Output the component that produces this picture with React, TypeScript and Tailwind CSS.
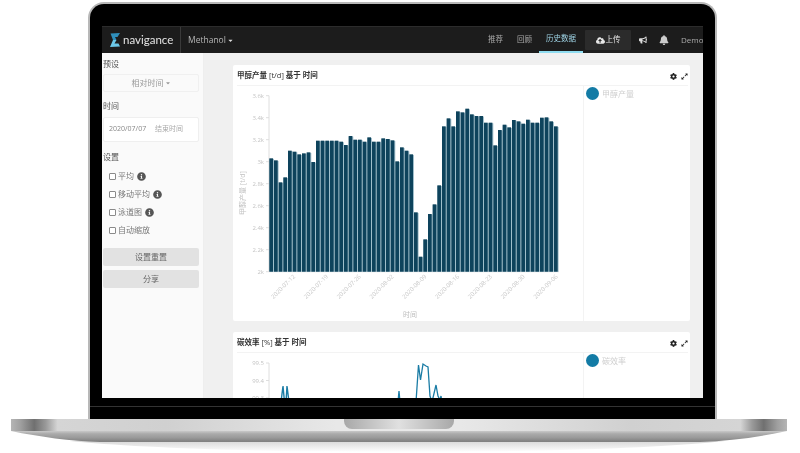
import { FaBell, FaBullhorn, FaCaretDown, FaCloudUploadAlt, FaCog, FaExpandAlt, FaInfoCircle } from 'react-icons/fa';

const FONT = "font-['Open_Sans','Noto_Sans_CJK_SC',sans-serif]";

// bar tops measured from the chart, in page px * 3 (offset from y=80)
const BAR_TOPS = [
  235, 241, 307, 292, 212, 215, 223, 220, 217, 246, 182, 182, 182, 182, 182, 185, 195, 168, 179, 179, 185, 172, 185, 185,
  175, 177, 181, 244, 202, 212, 223, 397, 530, 478, 402, 373, 316, 139, 115, 139, 94, 97, 86, 103, 108, 108, 128, 128,
  196, 150, 134, 142, 120, 124, 131, 119, 128, 128, 113, 112, 124, 139,
];

const Y_TICKS = ['3.6k', '3.4k', '3.2k', '3k', '2.8k', '2.6k', '2.4k', '2.2k', '2k'];
const X_TICKS = ['2020-07-12', '2020-07-19', '2020-07-26', '2020-08-02', '2020-08-09', '2020-08-16', '2020-08-23', '2020-08-30', '2020-09-06'];

function ProductionChart() {
  return (
    <svg viewBox="233 86 350 235" className="h-[235px] w-[350px]">
      <line x1="269" y1="95.7" x2="269" y2="271.7" stroke="#dedede" />
      <line x1="269" y1="271.7" x2="559" y2="271.7" stroke="#dedede" />
      {Y_TICKS.map((t, i) => (
        <g key={t}>
          <line x1="266" x2="269" y1={95.7 + i * 22} y2={95.7 + i * 22} stroke="#dedede" />
          <text x="264" y={97.7 + i * 22} textAnchor="end" fontSize="6" fill="#c4c4c4">{t}</text>
        </g>
      ))}
      {BAR_TOPS.map((top, i) => {
        const y = 80 + top / 3;
        const x = 230 + (118 + 14 * i) / 3;
        return (
          <g key={i}>
            <rect x={x} y={y + 0.6} width="4.67" height={271.7 - y - 0.6} fill="#a6c4d0" />
            <rect x={x} y={y} width="3.7" height={271.7 - y} fill="#0e435c" />
          </g>
        );
      })}
      {X_TICKS.map((t, i) => {
        const x = 295.7 + i * 32.8;
        return (
          <text key={t} x={x} y="277" textAnchor="end" fontSize="6" fill="#c8c8c8" transform={`rotate(-45 ${x} 277)`}>
            {t}
          </text>
        );
      })}
      <text x="410" y="317" textAnchor="middle" fontSize="7" fill="#bdbdbd">时间</text>
      <text x="245" y="193" textAnchor="middle" fontSize="7" fill="#c4c4c4" transform="rotate(-90 245 193)">甲醇产量 [t/d]</text>
    </svg>
  );
}

function EfficiencyChart() {
  return (
    <svg viewBox="233 353 350 45" className="h-[45px] w-[350px]">
      <line x1="269" y1="363" x2="269" y2="400" stroke="#dedede" />
      {['99.5', '99.4', '99.3'].map((t, i) => (
        <g key={t}>
          <line x1="266" x2="269" y1={363 + i * 17.5} y2={363 + i * 17.5} stroke="#dedede" />
          <text x="264" y={365 + i * 17.5} textAnchor="end" fontSize="6" fill="#c4c4c4">{t}</text>
        </g>
      ))}
      <polyline fill="none" stroke="#1a7ca5" strokeWidth="1.4" points="281,402 283,386 284.5,402 286,402 287,386 289,402" />
      <polyline fill="none" stroke="#1a7ca5" strokeWidth="1.3" points="398,402 399,391 400,402" />
      <polyline
        fill="none"
        stroke="#1a7ca5"
        strokeWidth="1.3"
        points="416,402 418.5,365 420.5,380 423,364 426,366 428,367 430,396 432,402 436,385 438,396 440,400 441,396 442,402"
      />
    </svg>
  );
}

function Card({ title, unit, legend, height, children }: { title: string; unit: string; legend: string; height: string; children: React.ReactNode }) {
  return (
    <div className={`${height} w-[457px] shrink-0 rounded-[2px] bg-white`}>
      <div className="ml-[4px] mr-[2px] flex h-[21px] items-center justify-between border-b border-[#f3f3f3] pt-[2px] text-[7.5px]">
        <span className="font-bold text-[#333]">
          {title} <span className="font-normal">[{unit}]</span> 基于 时间
        </span>
        <span className="flex items-center gap-[4px] text-[7px] text-[#222]">
          <FaCog />
          <FaExpandAlt />
        </span>
      </div>
      <div className="flex">
        <div className="w-[350px] shrink-0">{children}</div>
        <div className="flex-1 border-l border-[#f3f3f3] pl-[2px] pt-[1px]">
          <div className="flex items-center gap-[3px] text-[8px] text-[#cfcfcf]">
            <span className="h-[13px] w-[13px] rounded-full bg-[#137ba5]" />
            {legend}
          </div>
        </div>
      </div>
    </div>
  );
}

function Check({ label, info }: { label: string; info?: boolean }) {
  return (
    <div className="flex h-[18px] items-center pl-[6px] text-[8px] text-[#777]">
      <span className="mr-[2px] h-[7px] w-[7px] rounded-[1px] border border-[#8a8a8a] bg-white" />
      {label}
      {info && <FaInfoCircle className="ml-[3px] text-[9px] text-[#555]" />}
    </div>
  );
}

function Navbar() {
  return (
    <div className="flex h-[27px] shrink-0 items-center border-t border-[#2c2c2c] bg-[#1c1c1c] text-[7.5px] text-[#aaa]">
      <div className="flex h-full w-[79px] items-center gap-[3px] border-r border-[#3a3a3a] pl-[8px]">
        <svg viewBox="0 0 10 14" className="h-[14px] w-[10px]">
          <path d="M0.5 0.5L10 0 7.5 4 5 4 6.5 7 3 7Z" fill="#2f8fbc" />
          <path d="M6.5 7L3 7 0 14 10 13.5 8.5 10.5 4.5 10.5Z" fill="#6cc8e8" />
        </svg>
        <span className="text-[11.5px] text-[#e4e4e4] font-['Lato',sans-serif]">navigance</span>
      </div>
      <div className="ml-[7px] flex items-center gap-[1px] text-[8.5px] text-[#b5b5b5]">
        Methanol <FaCaretDown className="text-[7px] text-[#ddd]" />
      </div>
      <div className="ml-auto flex h-full items-center">
        <span className="mr-[14px]">推荐</span>
        <span className="mr-[7px]">回顾</span>
        <span className="flex h-full w-[44px] items-center justify-center border-b-2 border-[#8fdcf0] text-[#9fd4e6]">历史数据</span>
        <span className="ml-[2px] flex h-[20px] w-[46px] items-center justify-center gap-[1px] rounded-[1px] bg-[#2b2b2b] text-[#e8e8e8]">
          <FaCloudUploadAlt className="text-[9px]" />
          上传
        </span>
        <FaBullhorn className="ml-[8px] text-[8px] text-[#ddd]" />
        <FaBell className="ml-[12px] text-[10px] text-[#ccc]" />
        <span className="ml-[12px] flex w-[22px] items-center gap-[1px] overflow-hidden whitespace-nowrap text-[8px]">
          Demo <FaCaretDown className="shrink-0 text-[7px]" />
        </span>
      </div>
    </div>
  );
}

function Sidebar() {
  return (
    <div className="flex w-[102px] shrink-0 flex-col border-r border-[#eeeeee] bg-[#fafafa] pl-[1px] pr-[4px] text-[8px] text-[#555]">
      <div className="flex h-[21px] items-center">预设</div>
      <div className="flex h-[18px] items-center justify-center gap-[1px] rounded-[2px] border border-[#f0f0f0] text-[#999]">
        相对时间 <FaCaretDown className="text-[6px]" />
      </div>
      <div className="mt-[3px] flex h-[22px] items-center">时间</div>
      <div className="flex h-[25px] items-center justify-between rounded-[2px] border border-[#efefef] bg-white pl-[5px] pr-[15px] text-[7px] text-[#888]">
        <span>2020/07/07</span>
        <span className="text-[#aaa]">结束时间</span>
      </div>
      <div className="mt-[5px] flex h-[20px] items-center">设置</div>
      <div>
        <Check label="平均" info />
        <Check label="移动平均" info />
        <Check label="泳道图" info />
        <Check label="自动缩放" />
      </div>
      <div className="mt-[9px] flex h-[18px] items-center justify-center rounded-[2px] bg-[#e2e2e2] text-[#666]">设置重置</div>
      <div className="mt-[4px] flex h-[18px] items-center justify-center rounded-[2px] bg-[#e2e2e2] text-[#666]">分享</div>
    </div>
  );
}

function Screen() {
  return (
    <div className={`${FONT} mx-[12px] flex h-[372px] w-[601px] flex-col overflow-hidden bg-[#f0f0f0] blur-[0.3px]`}>
      <Navbar />
      <div className="flex min-h-0 flex-1">
        <Sidebar />
        <div className="flex min-w-0 flex-1 flex-col gap-[11px] overflow-hidden pl-[29px] pt-[12px]">
          <Card title="甲醇产量" unit="t/d" legend="甲醇产量" height="h-[256px]">
            <ProductionChart />
          </Card>
          <Card title="碳效率" unit="%" legend="碳效率" height="h-[80px]">
            <EfficiencyChart />
          </Card>
        </div>
      </div>
    </div>
  );
}

export default function App() {
  return (
    <div className="h-[453px] w-[800px] overflow-hidden bg-white pt-[2px]">
      {/* lid */}
      <div className="ml-[88px] h-[417px] w-[629px] rounded-t-[16px] border-2 border-b-0 border-[#b8b8b8] bg-black pt-[22px]">
        <Screen />
        <div className="mt-[8px] h-px bg-[#333]" />
      </div>
      {/* base */}
      <div className="relative ml-[11px] h-[12px] w-[776px] bg-[linear-gradient(90deg,#b5b5b5_0%,#a0a0a0_1.2%,#707070_3%,#9a9a9a_4.5%,#d5d5d5_6%,#d0d0d0_20%,#e8e8e8_42%,#e8e8e8_58%,#d0d0d0_80%,#d5d5d5_94%,#9a9a9a_95.5%,#707070_97%,#a0a0a0_98.8%,#b5b5b5_100%)]">
        <div className="absolute left-[333px] top-0 h-[10px] w-[110px] rounded-b-[8px] bg-[linear-gradient(90deg,#a8a8a8,#e0e0e0_50%,#a8a8a8)]" />
      </div>
      <svg viewBox="0 431 800 22" className="h-[22px] w-[800px]">
        <defs>
          <linearGradient id="baseBand" x1="0" y1="0" x2="0" y2="1">
            <stop offset="0" stopColor="#c8c8c8" />
            <stop offset="0.25" stopColor="#ababab" />
            <stop offset="0.6" stopColor="#9a9a9a" />
            <stop offset="0.95" stopColor="#808080" />
            <stop offset="1" stopColor="#999999" />
          </linearGradient>
          <linearGradient id="baseShadow" x1="0" y1="0" x2="0" y2="1">
            <stop offset="0" stopColor="#d8d8d8" />
            <stop offset="1" stopColor="#ffffff" />
          </linearGradient>
        </defs>
        <path d="M70 441H725C670 447 560 452 400 452S130 447 70 441Z" fill="url(#baseShadow)" />
        <path d="M11 431H787C760 437 730 441 700 442H100C70 441 40 437 11 431Z" fill="url(#baseBand)" />
      </svg>
    </div>
  );
}
